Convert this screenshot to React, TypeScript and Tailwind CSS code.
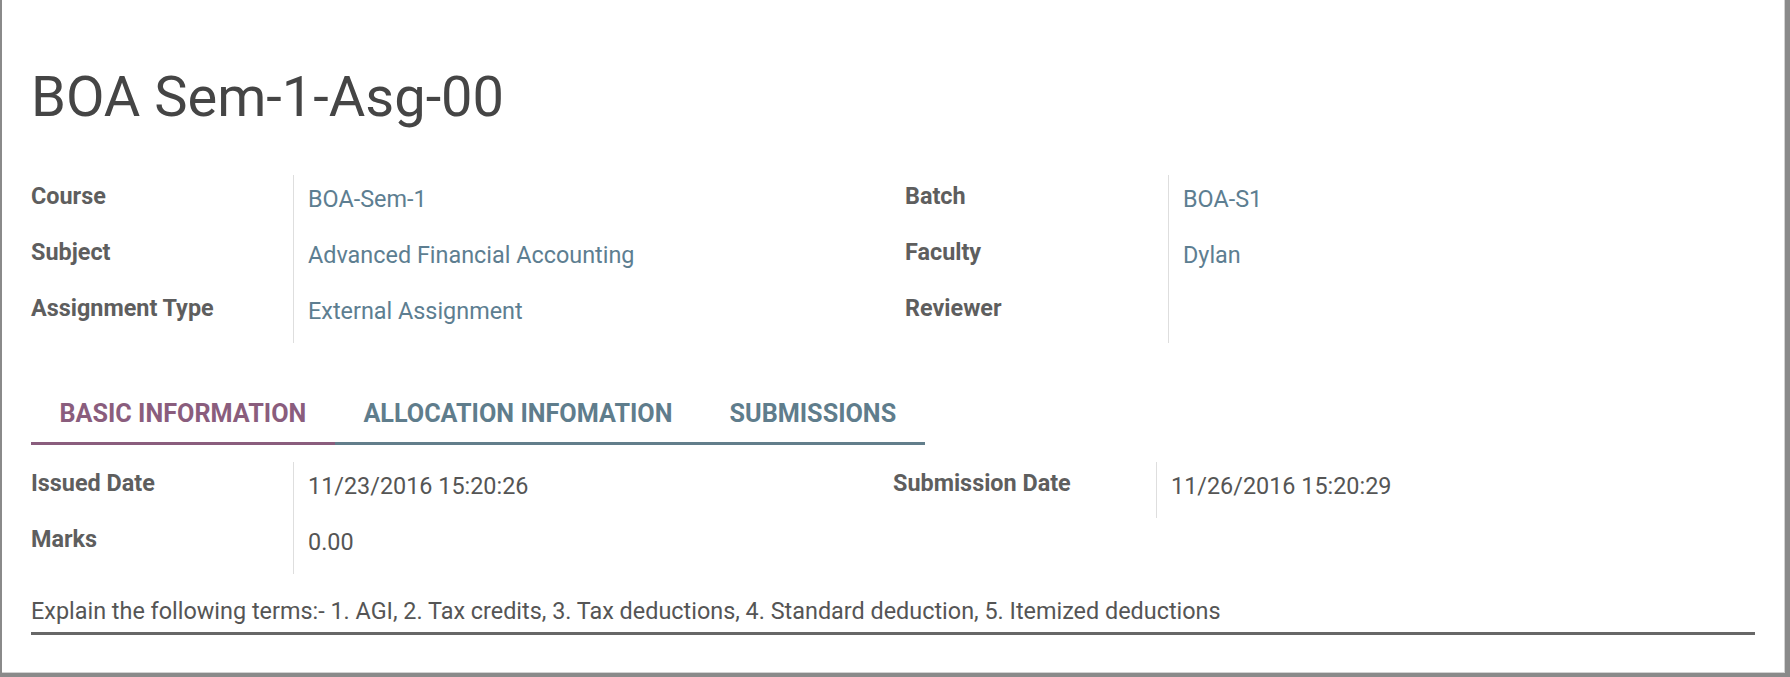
const topLeft = [
  { label: "Course", value: "BOA-Sem-1" },
  { label: "Subject", value: "Advanced Financial Accounting" },
  { label: "Assignment Type", value: "External Assignment" },
];

const topRight = [
  { label: "Batch", value: "BOA-S1" },
  { label: "Faculty", value: "Dylan" },
  { label: "Reviewer", value: "" },
];

const basicLeft = [
  { label: "Issued Date", value: "11/23/2016 15:20:26" },
  { label: "Marks", value: "0.00" },
];

const basicRight = [{ label: "Submission Date", value: "11/26/2016 15:20:29" }];

const tabs = [
  { label: "BASIC INFORMATION", active: true },
  { label: "ALLOCATION INFOMATION", active: false },
  { label: "SUBMISSIONS", active: false },
];

type Field = { label: string; value: string };

function FieldGroup({
  fields,
  width,
  labelWidth,
  valueTone,
}: {
  fields: Field[];
  width?: string;
  labelWidth: string;
  valueTone: string;
}) {
  return (
    <div className={`flex ${width ?? "flex-1"}`}>
      {/* labels */}
      <div className={`flex flex-col ${labelWidth}`}>
        {fields.map((f) => (
          <div
            key={f.label}
            className="h-[56px] pt-[9.5px] text-[23.4px] leading-[22px] font-bold text-[#5e5e5e]"
          >
            {f.label}
          </div>
        ))}
      </div>
      {/* values */}
      <div className="flex flex-1 flex-col border-l border-[#dedede] pl-[14px]">
        {fields.map((f) => (
          <div
            key={f.label}
            className={`h-[56px] pt-[12.5px] text-[23.4px] leading-[22px] ${valueTone}`}
          >
            {f.value}
          </div>
        ))}
      </div>
    </div>
  );
}

export default function App() {
  return (
    <div
      className="flex h-[677px] w-full bg-[#8a8a8a] pl-[2px] pr-[5px] pb-[4px]"
      style={{ fontFamily: "Roboto, 'Liberation Sans', sans-serif" }}
    >
      <div className="flex flex-1 flex-col border-r border-b border-[#d2d2d2] bg-white px-[29px]">
        {/* Title */}
        <h1 className="pt-[70px] text-[56px] leading-[55px] font-normal text-[#454545]">
          BOA Sem-1-Asg-00
        </h1>

        {/* Header fields */}
        <div className="mt-[50px] flex items-start">
          <FieldGroup
            fields={topLeft}
            width="w-[874px]"
            labelWidth="w-[262px]"
            valueTone="text-[#5d7e91]"
          />
          <FieldGroup fields={topRight} labelWidth="w-[263px]" valueTone="text-[#5d7e91]" />
        </div>

        {/* Tabs */}
        <div className="mt-[58px] flex w-fit border-b-[3px] border-[#627e8b]">
          {tabs.map((t) => (
            <div
              key={t.label}
              className={`-mb-[3px] border-b-[3px] px-[28.5px] pb-[16px] text-[25.2px] leading-[25px] font-bold ${
                t.active
                  ? "border-[#8a5d7d] text-[#8a5d7d]"
                  : "border-transparent text-[#5f7d8c]"
              }`}
            >
              {t.label}
            </div>
          ))}
        </div>

        {/* Basic information */}
        <div className="mt-[17px] flex items-start">
          <FieldGroup
            fields={basicLeft}
            width="w-[862px]"
            labelWidth="w-[262px]"
            valueTone="text-[#555555]"
          />
          <FieldGroup fields={basicRight} labelWidth="w-[263px]" valueTone="text-[#555555]" />
        </div>

        <div className="mt-[26px] border-b-[3px] border-[#676767] pb-[10px] text-[23.4px] leading-[22px] text-[#555555]">
          Explain the following terms:- 1. AGI, 2. Tax credits, 3. Tax deductions, 4. Standard
          deduction, 5. Itemized deductions
        </div>
      </div>
    </div>
  );
}
